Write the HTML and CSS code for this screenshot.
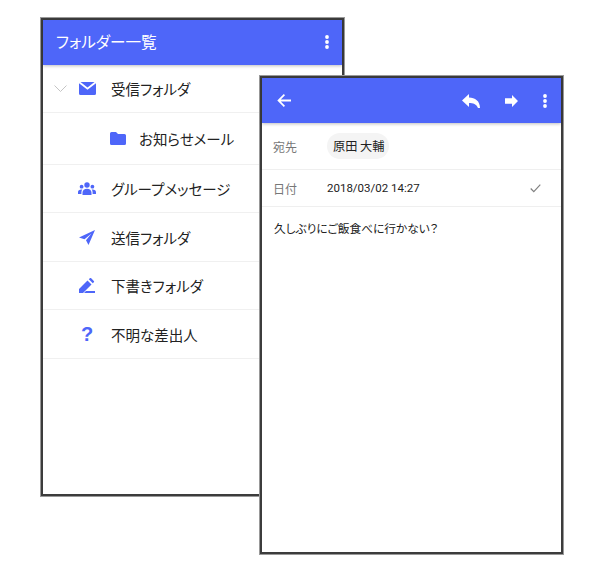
FILE: index.html
```html
<!DOCTYPE html>
<html lang="ja">

<head>
    <meta charset="UTF-8">
    <title>フォルダー一覧</title>
    <link rel="stylesheet" href="styles.css">
</head>

<body>
    <!-- Folder list screen -->
    <div class="phone phone-back">
        <div class="app-bar folder-bar">
            <div class="folder-title">フォルダー一覧</div>
            <svg class="more" width="4" height="14" viewBox="0 0 4 14"><circle cx="2" cy="2" r="1.900"/><circle cx="2" cy="7" r="1.900"/><circle cx="2" cy="12" r="1.900"/></svg>
        </div>
        <div class="folder-row row-inbox">
            <svg class="chevron" width="13" height="7" viewBox="0 0 13 7"><path d="M.5.5l6 6 6-6" fill="none" stroke="#c4c4c4"/></svg>
            <div class="icon-box"><svg width="17" height="13" viewBox="0 0 17 13"><path d="M1.500 0L8.500 5.600 15.500 0zM0 1.200V11.500A1.500 1.500 0 0 0 1.500 13h14a1.500 1.500 0 0 0 1.500-1.500V1.200L8.500 7.800z"/></svg></div>
            <span>受信フォルダ</span>
        </div>
        <div class="folder-row row-sub">
            <div class="icon-box"><svg width="16" height="13" viewBox="0 0 16 13"><path d="M1.500 0H6l2 2h6.500A1.500 1.500 0 0 1 16 3.500v8a1.500 1.500 0 0 1-1.500 1.500h-13A1.500 1.500 0 0 1 0 11.500v-10A1.500 1.500 0 0 1 1.500 0z"/></svg></div>
            <span>お知らせメール</span>
        </div>
        <div class="folder-row">
            <div class="icon-box"><svg width="18" height="13" viewBox="0 0 18 13"><circle cx="9" cy="3" r="2.700"/><circle cx="3.600" cy="4.700" r="1.900"/><circle cx="14.400" cy="4.700" r="1.900"/><path d="M4.500 13v-2.500C4.500 8 6.500 6.700 9 6.700s4.500 1.300 4.500 3.800V13zM0 12v-1.800C0 8.500 1.300 7.500 3.600 7.500c.3 0 .5 0 .7.100-.6.800-.9 1.800-.9 2.900V12zM18 12v-1.800c0-1.700-1.300-2.700-3.600-2.700-.3 0-.5 0-.7.100.6.800.9 1.800.9 2.900V12z"/></svg></div>
            <span>グループメッセージ</span>
        </div>
        <div class="folder-row row-tall">
            <div class="icon-box"><svg width="16" height="15" viewBox="0 0 16 15"><path d="M16 0L0 7.500l5.500 1.700L12.500 3.500 7 10.300 9.500 15z"/></svg></div>
            <span>送信フォルダ</span>
        </div>
        <div class="folder-row">
            <div class="icon-box"><svg width="16" height="15" viewBox="0 0 16 15"><path d="M0 11v4h4l8.500-8.500-4-4zM9.800 1.300l1-1a1 1 0 0 1 1.400 0l2.600 2.600a1 1 0 0 1 0 1.400l-1 1zM7 13h9v2H5z"/></svg></div>
            <span>下書きフォルダ</span>
        </div>
        <div class="folder-row row-tall">
            <div class="icon-box icon-q">?</div>
            <span>不明な差出人</span>
        </div>
    </div>

    <!-- Message screen -->
    <div class="phone phone-front">
        <div class="app-bar mail-bar">
            <svg class="back" width="14" height="13" viewBox="0 0 14 13"><path d="M14 5.500H3.800L8 1.200 6.800 0 .3 6.500 6.800 13 8 11.800 3.800 7.500H14z"/></svg>
            <div class="bar-actions">
                <svg class="reply" width="18" height="14" viewBox="0 0 18 14"><path d="M7 0L0 6.500 7 13V9c4 0 7.500 1 9 5h2C18 7 13 3.500 7 3.500z"/></svg>
                <svg class="forward" width="13" height="12" viewBox="0 0 13 12"><path d="M7 0l6 6-6 6V8.800H0V3.200h7z"/></svg>
                <svg class="more" width="4" height="14" viewBox="0 0 4 14"><circle cx="2" cy="2" r="1.900"/><circle cx="2" cy="7" r="1.900"/><circle cx="2" cy="12" r="1.900"/></svg>
            </div>
        </div>
        <div class="mail-row row-to">
            <span class="mail-label">宛先</span>
            <span class="chip">原田 大輔</span>
        </div>
        <div class="mail-row row-date">
            <span class="mail-label">日付</span>
            <span class="mail-date">2018/03/02 14:27</span>
            <svg class="check" width="11" height="9" viewBox="0 0 11 9"><path d="M.7 4.500L3.800 7.700 10.300.7" fill="none" stroke="#808080" stroke-width="1.200"/></svg>
        </div>
        <div class="mail-body">久しぶりにご飯食べに行かない？</div>
    </div>
</body>

</html>
```
FILE: styles.css
```css
* {
    margin: 0;
    padding: 0;
    box-sizing: border-box;
}

body {
    position: relative;
    width: 600px;
    height: 573px;
    overflow: hidden;
    background: #fff;
    color: #222;
    font-family: "Noto Sans CJK JP", "Noto Sans", sans-serif;
    font-size: 14.500px;
    font-feature-settings: "palt";
}

/* Two overlapping screens */
.phone {
    position: absolute;
    width: 303px;
    height: 478px;
    background: #fff;
    border: 2px solid #3c3c3c;
    box-shadow: 0 0 0 1px #999;
}

.phone-back {
    left: 41px;
    top: 18px;
}

.phone-front {
    left: 260px;
    top: 76px;
}

/* Blue top bar */
.app-bar {
    display: flex;
    align-items: center;
    justify-content: space-between;
    height: 45px;
    background: #4e66f9;
    box-shadow: 0 1px 3px rgba(0, 0, 0, 0.25);
    fill: #fff;
}

.folder-bar {
    padding: 0 13px 1px 13px;
}

.folder-title {
    margin-top: -3px;
    color: #fff;
    font-size: 15.600px;
}

.mail-bar {
    padding: 0 14px 0 15px;
}

.bar-actions {
    display: flex;
    align-items: center;
}

.reply,
.forward {
    margin-right: 25px;
}

/* Folder rows */
.folder-row {
    display: flex;
    align-items: center;
    height: 48px;
    padding-left: 35px;
    border-bottom: 1px solid #f0f0f0;
}

.row-tall {
    height: 49px;
}

.icon-box {
    display: flex;
    justify-content: center;
    flex: none;
    width: 18px;
    margin-right: 15px;
    fill: #4e66f9;
}

.row-inbox {
    padding-left: 11px;
}

.chevron {
    margin-right: 11px;
}

.row-sub {
    height: 52px;
    padding-left: 66px;
}

.row-sub .icon-box {
    margin-right: 12px;
}

.icon-q {
    color: #4e66f9;
    font-family: "Liberation Sans", sans-serif;
    font-size: 20px;
    font-weight: bold;
}

/* Message rows */
.mail-row {
    display: flex;
    align-items: center;
    padding: 0 20px 0 11px;
    border-bottom: 1px solid #efefef;
}

.row-to {
    height: 47px;
}

.row-date {
    height: 37px;
}

.mail-label {
    width: 54px;
    color: #777;
    font-size: 12px;
}

.chip {
    padding: 0 5px 0 6px;
    height: 26px;
    line-height: 26px;
    border-radius: 13px;
    background: #f4f4f4;
    font-size: 12.200px;
}

.mail-date {
    flex: 1;
    font-family: Roboto, sans-serif;
    font-size: 11.500px;
    font-feature-settings: normal;
}

.mail-body {
    padding: 12px;
    font-size: 11.700px;
}
```
